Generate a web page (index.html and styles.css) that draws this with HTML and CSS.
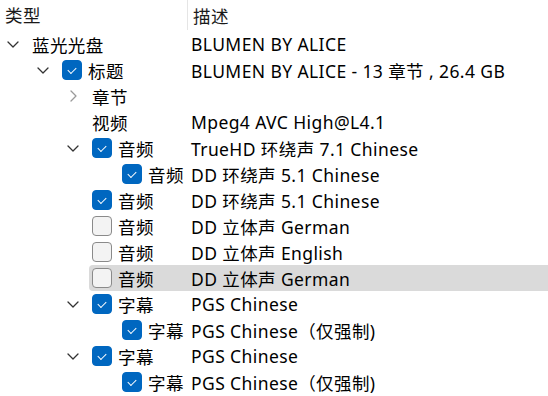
FILE: index.html
```html
<!DOCTYPE html>
<html lang="zh-CN">
<head>
<meta charset="utf-8">
<link rel="stylesheet" href="styles.css">
</head>
<body>
<div class="tree">
  <div class="header">
    <div class="hcell first">类型</div>
    <div class="hcell">描述</div>
  </div>

  <div class="row l0">
    <span class="indent"></span>
    <span class="exp"><svg class="chev down" viewBox="0 0 12 7"><path d="M1 1l5 5 5-5"/></svg></span>
    <div class="main"><span class="name">蓝光光盘</span><span class="desc">BLUMEN BY ALICE</span></div>
  </div>

  <div class="row l1">
    <span class="indent"></span>
    <span class="exp"><svg class="chev down" viewBox="0 0 12 7"><path d="M1 1l5 5 5-5"/></svg></span>
    <div class="main"><span class="name"><span class="cb on"></span>标题</span><span class="desc">BLUMEN BY ALICE - 13 章节 , 26.4 GB</span></div>
  </div>

  <div class="row l2">
    <span class="indent"></span>
    <span class="exp"><svg class="chev right" viewBox="0 0 7 12"><path d="M1 1l5 5-5 5"/></svg></span>
    <div class="main"><span class="name">章节</span><span class="desc"></span></div>
  </div>

  <div class="row l2">
    <span class="indent"></span>
    <span class="exp"></span>
    <div class="main"><span class="name">视频</span><span class="desc">Mpeg4 AVC High@L4.1</span></div>
  </div>

  <div class="row l2">
    <span class="indent"></span>
    <span class="exp"><svg class="chev down" viewBox="0 0 12 7"><path d="M1 1l5 5 5-5"/></svg></span>
    <div class="main"><span class="name"><span class="cb on"></span>音频</span><span class="desc">TrueHD 环绕声 7.1 Chinese</span></div>
  </div>

  <div class="row l3">
    <span class="indent"></span>
    <span class="exp"></span>
    <div class="main"><span class="name"><span class="cb on"></span>音频</span><span class="desc">DD 环绕声 5.1 Chinese</span></div>
  </div>

  <div class="row l2">
    <span class="indent"></span>
    <span class="exp"></span>
    <div class="main"><span class="name"><span class="cb on"></span>音频</span><span class="desc">DD 环绕声 5.1 Chinese</span></div>
  </div>

  <div class="row l2">
    <span class="indent"></span>
    <span class="exp"></span>
    <div class="main"><span class="name"><span class="cb"></span>音频</span><span class="desc">DD 立体声 German</span></div>
  </div>

  <div class="row l2">
    <span class="indent"></span>
    <span class="exp"></span>
    <div class="main"><span class="name"><span class="cb"></span>音频</span><span class="desc">DD 立体声 English</span></div>
  </div>

  <div class="row l2 sel">
    <span class="indent"></span>
    <span class="exp"></span>
    <div class="main"><span class="name"><span class="cb"></span>音频</span><span class="desc">DD 立体声 German</span></div>
  </div>

  <div class="row l2">
    <span class="indent"></span>
    <span class="exp"><svg class="chev down" viewBox="0 0 12 7"><path d="M1 1l5 5 5-5"/></svg></span>
    <div class="main"><span class="name"><span class="cb on"></span>字幕</span><span class="desc">PGS Chinese</span></div>
  </div>

  <div class="row l3">
    <span class="indent"></span>
    <span class="exp"></span>
    <div class="main"><span class="name"><span class="cb on"></span>字幕</span><span class="desc">PGS Chinese（仅强制)</span></div>
  </div>

  <div class="row l2">
    <span class="indent"></span>
    <span class="exp"><svg class="chev down" viewBox="0 0 12 7"><path d="M1 1l5 5 5-5"/></svg></span>
    <div class="main"><span class="name"><span class="cb on"></span>字幕</span><span class="desc">PGS Chinese</span></div>
  </div>

  <div class="row l3">
    <span class="indent"></span>
    <span class="exp"></span>
    <div class="main"><span class="name"><span class="cb on"></span>字幕</span><span class="desc">PGS Chinese（仅强制)</span></div>
  </div>
</div>
</body>
</html>
```

FILE: styles.css
```css
* { box-sizing: border-box; }
html, body { margin: 0; padding: 0; background: #fff; }
body {
  font-family: "Noto Sans", "Noto Sans CJK SC", sans-serif;
  font-size: 17.5px;
  letter-spacing: 0.4px;
  color: #000;
  width: 548px;
  height: 396px;
  overflow: hidden;
}
.tree { display: flex; flex-direction: column; }
.header {
  display: flex;
  height: 31px;
  align-items: stretch;
}
.hcell {
  display: flex;
  align-items: center;
  padding-left: 5px;
  padding-bottom: 1px;
  color: #1a1a1a;
}
.hcell.first {
  width: 188px;
  border-right: 1px solid #e5e5e5;
  margin-bottom: 1px;
}
.row {
  display: flex;
  height: 26px;
  align-items: stretch;
}
.l0 { --i: 0; }
.l1 { --i: 1; }
.l2 { --i: 2; }
.l3 { --i: 3; }
.indent { width: calc(var(--i) * 30px); flex: none; }
.exp {
  width: 29px;
  flex: none;
  display: flex;
  align-items: center;
  padding-left: 7px;
}
.chev { fill: none; stroke-width: 1.3; stroke-linecap: round; stroke-linejoin: round; }
.chev.down { width: 12px; height: 7px; stroke: #333; }
.chev.right { width: 7px; height: 12px; stroke: #9a9a9a; margin-left: 3px; }
.main {
  flex: 1;
  display: grid;
  grid-template-columns: calc(155px - var(--i) * 30px) 1fr;
  padding-left: 3px;
  align-items: center;
  border-radius: 4px 0 0 4px;
  white-space: nowrap;
}
.row.sel .main { background: #dadada; }
.name {
  display: flex;
  align-items: center;
  gap: 6px;
  overflow: hidden;
}
.desc { padding-left: 4px; }
.cb {
  width: 20px;
  height: 20px;
  flex: none;
  border-radius: 4px;
  border: 1px solid #8a8a8a;
  background: #f3f3f3;
  position: relative;
}
.cb.on {
  background: #0067c0;
  border-color: #0067c0;
}
.cb.on::after {
  content: "";
  position: absolute;
  width: 7px;
  height: 4px;
  border-left: 1.2px solid #fff;
  border-bottom: 1.2px solid #fff;
  transform: rotate(-45deg);
  transform-origin: center;
  top: 6px;
  left: 5px;
}
```
